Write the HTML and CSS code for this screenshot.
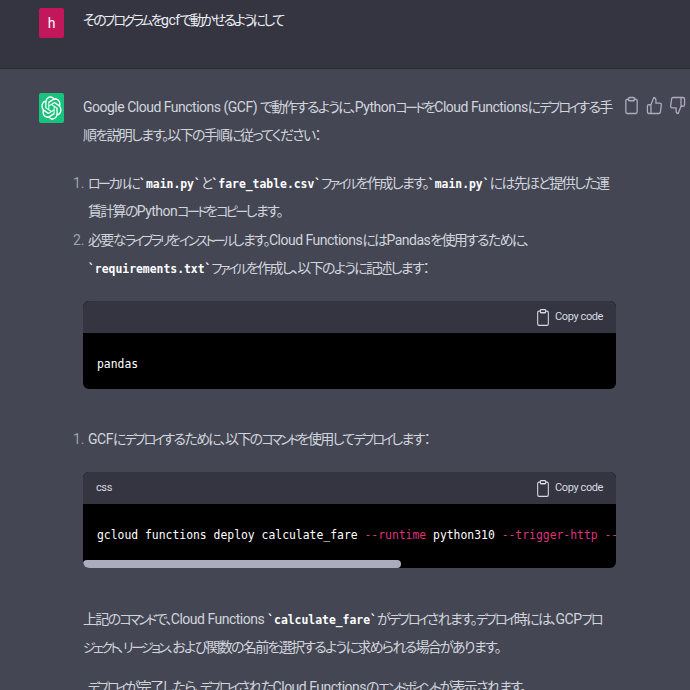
FILE: index.html
```html
<!DOCTYPE html>
<html lang="ja">
  <head>
    <meta charset="utf-8">
    <meta name="viewport" content="width=device-width,initial-scale=1.0">
    <title>ChatGPT</title>
    <link rel="stylesheet" href="styles.css">
  </head>
  <body>
    <section class="row userRow">
      <div class="avatar userAvatar">h</div>
      <div class="userText">その<span class="ka">プログラム</span>を<span class="en">gcf</span>で動かせるようにして</div>
    </section>

    <section class="row botRow">
      <div class="avatar botAvatar">
        <svg viewBox="0 0 41 41" width="21" height="24" fill="#fff" preserveAspectRatio="none"><path d="M37.5324 16.8707C37.9808 15.5241 38.1363 14.0974 37.9886 12.6859C37.8409 11.2744 37.3934 9.91076 36.676 8.68622C35.6126 6.83404 33.9882 5.3676 32.0373 4.4985C30.0864 3.62941 27.9098 3.40259 25.8215 3.85078C24.8796 2.7893 23.7219 1.94125 22.4257 1.36341C21.1295 0.785575 19.7249 0.491269 18.3058 0.500197C16.1708 0.495044 14.0893 1.16803 12.3614 2.42214C10.6335 3.67624 9.34853 5.44666 8.6917 7.47815C7.30085 7.76286 5.98686 8.3414 4.8377 9.17505C3.68854 10.0087 2.73073 11.0782 2.02839 12.312C0.956464 14.1591 0.498905 16.2988 0.721698 18.4228C0.944492 20.5467 1.83612 22.5449 3.268 24.1293C2.81966 25.4759 2.66413 26.9026 2.81182 28.3141C2.95951 29.7256 3.40701 31.0892 4.12437 32.3138C5.18791 34.1659 6.8123 35.6322 8.76321 36.5013C10.7141 37.3704 12.8907 37.5973 14.9789 37.1492C15.9208 38.2107 17.0786 39.0587 18.3747 39.6366C19.6709 40.2144 21.0755 40.5087 22.4946 40.4998C24.6307 40.5054 26.7133 39.8321 28.4418 38.5772C30.1704 37.3223 31.4556 35.5506 32.1119 33.5179C33.5027 33.2332 34.8167 32.6547 35.9659 31.821C37.115 30.9874 38.0728 29.9178 38.7752 28.684C39.8458 26.8371 40.3023 24.6979 40.0789 22.5748C39.8556 20.4517 38.9639 18.4544 37.5324 16.8707ZM22.4978 37.8849C20.7443 37.8874 19.0459 37.2733 17.6994 36.1501C17.7601 36.117 17.8666 36.0586 17.936 36.0161L25.9004 31.4156C26.1003 31.3019 26.2663 31.137 26.3813 30.9378C26.4964 30.7386 26.5563 30.5124 26.5549 30.2825V19.0542L29.9213 20.998C29.9389 21.0068 29.9541 21.0198 29.9656 21.0359C29.977 21.052 29.9842 21.0707 29.9867 21.0902V30.3889C29.9842 32.375 29.1946 34.2791 27.7909 35.6841C26.3872 37.0892 24.4838 37.8806 22.4978 37.8849ZM6.39227 31.0064C5.51397 29.4888 5.19742 27.7107 5.49804 25.9832C5.55718 26.0187 5.66048 26.0818 5.73461 26.1244L13.699 30.7248C13.8975 30.8408 14.1233 30.902 14.3532 30.902C14.583 30.902 14.8088 30.8408 15.0073 30.7248L24.731 25.1103V28.9979C24.7321 29.0177 24.7283 29.0376 24.7199 29.0556C24.7115 29.0736 24.6988 29.0893 24.6829 29.1012L16.6317 33.7497C14.9096 34.7416 12.8643 35.0097 10.9447 34.4954C9.02506 33.9811 7.38785 32.7263 6.39227 31.0064ZM4.29707 13.6194C5.17156 12.0998 6.55279 10.9364 8.19885 10.3327C8.19885 10.4013 8.19491 10.5228 8.19491 10.6071V19.808C8.19351 20.0378 8.25334 20.2638 8.36823 20.4629C8.48312 20.6619 8.64893 20.8267 8.84863 20.9404L18.5723 26.5542L15.206 28.4979C15.1894 28.5089 15.1703 28.5155 15.1505 28.5173C15.1307 28.5191 15.1107 28.516 15.0924 28.5082L7.04046 23.8557C5.32135 22.8601 4.06716 21.2235 3.55289 19.3046C3.03862 17.3858 3.30624 15.3413 4.29707 13.6194ZM31.955 20.0556L22.2312 14.4411L25.5976 12.4981C25.6142 12.4872 25.6333 12.4805 25.6531 12.4787C25.6729 12.4769 25.6928 12.4801 25.7111 12.4879L33.7631 17.1364C34.9967 17.849 36.0017 18.8982 36.6606 20.1613C37.3194 21.4244 37.6047 22.849 37.4832 24.2684C37.3617 25.6878 36.8382 27.0432 35.9743 28.1759C35.1103 29.3086 33.9415 30.1717 32.6047 30.6641C32.6047 30.5947 32.6047 30.4733 32.6047 30.3889V21.188C32.6066 20.9586 32.5474 20.7328 32.4332 20.5338C32.319 20.3348 32.154 20.1698 31.955 20.0556ZM35.3055 15.0128C35.2464 14.9765 35.1431 14.9142 35.069 14.8717L27.1045 10.2712C26.906 10.1554 26.6803 10.0943 26.4504 10.0943C26.2206 10.0943 25.9948 10.1554 25.7963 10.2712L16.0726 15.8858V11.9982C16.0715 11.9783 16.0753 11.9585 16.0837 11.9405C16.0921 11.9225 16.1048 11.9068 16.1207 11.8949L24.1719 7.25025C25.4053 6.53903 26.8158 6.19376 28.2383 6.25482C29.6608 6.31589 31.0364 6.78077 32.2044 7.59508C33.3723 8.40939 34.2842 9.53945 34.8334 10.8531C35.3826 12.1667 35.5464 13.6095 35.3055 15.0128ZM14.2424 21.9419L10.8752 19.9981C10.8576 19.9893 10.8423 19.9763 10.8309 19.9602C10.8195 19.9441 10.8122 19.9254 10.8098 19.9058V10.6071C10.8107 9.18295 11.2173 7.78848 11.9819 6.58696C12.7466 5.38544 13.8377 4.42659 15.1275 3.82264C16.4173 3.21869 17.8524 2.99464 19.2649 3.1767C20.6775 3.35876 22.0089 3.93941 23.1034 4.85067C23.0427 4.88379 22.937 4.94215 22.8668 4.98473L14.9024 9.58517C14.7025 9.69878 14.5366 9.86356 14.4215 10.0626C14.3065 10.2616 14.2466 10.4877 14.2479 10.7175L14.2424 21.9419ZM16.071 17.9991L20.4018 15.4978L24.7325 17.9975V22.9985L20.4018 25.4983L16.071 22.9985V17.9991Z"/></svg>
      </div>
      <div class="content">
        <p><span class="en">Google Cloud Functions (GCF) </span>で動作するように、<span class="en">Python</span><span class="ka">コード</span>を<span class="en">Cloud Functions</span>に<span class="ka">デプロイ</span>する手<br>順を説明します。以下の手順に従ってください：</p>
        <ol>
          <li><span class="ka">ローカル</span>に<code>`main.py`</code>と<code>`fare_table.csv`</code><span class="ka">ファイル</span>を作成します。<code>`main.py`</code>には先ほど提供した運<br>賃計算の<span class="en">Python</span><span class="ka">コード</span>を<span class="ka">コピー</span>します。</li>
          <li>必要な<span class="ka">ライブラリ</span>を<span class="ka">インストール</span>します。<span class="en">Cloud Functions</span>には<span class="en">Pandas</span>を使用するために、<br><code>`requirements.txt`</code><span class="ka">ファイル</span>を作成し、以下のように記述します：</li>
        </ol>
        <div class="codeBox">
          <div class="codeHead">
            <span></span>
            <span class="copyBtn">
              <svg class="copyIcon" viewBox="0 0 24 24" preserveAspectRatio="none"><path d="M16 4h2a2 2 0 0 1 2 2v14a2 2 0 0 1-2 2H6a2 2 0 0 1-2-2V6a2 2 0 0 1 2-2h2"/><rect x="8" y="2" width="8" height="4" rx="1"/></svg>
              Copy code
            </span>
          </div>
          <pre class="codeBody">pandas</pre>
        </div>
        <ol class="listAfter">
          <li><span class="en">GCF</span>に<span class="ka">デプロイ</span>するために、以下の<span class="ka">コマンド</span>を使用して<span class="ka">デプロイ</span>します：</li>
        </ol>
        <div class="codeBox">
          <div class="codeHead">
            <span>css</span>
            <span class="copyBtn">
              <svg class="copyIcon" viewBox="0 0 24 24" preserveAspectRatio="none"><path d="M16 4h2a2 2 0 0 1 2 2v14a2 2 0 0 1-2 2H6a2 2 0 0 1-2-2V6a2 2 0 0 1 2-2h2"/><rect x="8" y="2" width="8" height="4" rx="1"/></svg>
              Copy code
            </span>
          </div>
          <pre class="codeBody">gcloud functions deploy calculate_fare <span class="flag">--runtime</span> python310 <span class="flag">--trigger-http</span> <span class="flag">--allow-unauthenticated</span></pre>
          <div class="scrollTrack"><div class="scrollThumb"></div></div>
        </div>
        <p class="afterCode">上記の<span class="ka">コマンド</span>で、<span class="en">Cloud Functions </span><code>`calculate_fare`</code>が<span class="ka">デプロイ</span>されます。<span class="ka">デプロイ</span>時には、<span class="en">GCP</span><span class="ka">プロ</span><br><span class="ka">ジェクト</span>、<span class="ka">リージョン</span>、および関数の名前を選択するように求められる場合があります。</p>
        <p class="lastLine"><span class="ka">デプロイ</span>が完了したら、<span class="ka">デプロイ</span>された<span class="en">Cloud Functions</span>の<span class="ka">エンドポイント</span>が表示されます。</p>
      </div>
      <div class="actions">
        <svg viewBox="0 0 24 24" preserveAspectRatio="none"><path d="M16 4h2a2 2 0 0 1 2 2v14a2 2 0 0 1-2 2H6a2 2 0 0 1-2-2V6a2 2 0 0 1 2-2h2"/><rect x="8" y="2" width="8" height="4" rx="1"/></svg>
        <svg viewBox="0 0 24 24" preserveAspectRatio="none"><path d="M14 9V5a3 3 0 0 0-3-3l-4 9v11h11.28a2 2 0 0 0 2-1.7l1.38-9a2 2 0 0 0-2-2.3zM7 22H4a2 2 0 0 1-2-2v-7a2 2 0 0 1 2-2h3"/></svg>
        <svg viewBox="0 0 24 24" preserveAspectRatio="none"><path d="M10 15v4a3 3 0 0 0 3 3l4-9V2H5.72a2 2 0 0 0-2 1.7l-1.38 9a2 2 0 0 0 2 2.3zm7-13h2.67A2.31 2.31 0 0 1 22 4v7a2.31 2.31 0 0 1-2.33 2H17"/></svg>
      </div>
    </section>
  </body>
</html>
```

FILE: styles.css
```css
html, body {
  height: 100%;
  overflow: hidden;
}
body {
  margin: 0;
  padding: 0;
  background-color: #444654;
  color: #d1d5db;
  font-family: Roboto, "Noto Sans CJK JP", sans-serif;
  font-size: 14px;
  line-height: 28px;
  letter-spacing: -1.7px;
  font-feature-settings: "palt";
}
.en {
  letter-spacing: -0.5px;
}
.ka {
  font-size: 13px;
  line-height: 1;
  letter-spacing: -2.6px;
}
.row {
  display: flex;
  align-items: flex-start;
  padding-left: 39px;
}
.userRow {
  height: 69px;
  box-sizing: border-box;
  padding-top: 8px;
  background-color: #343541;
  border-bottom: 1px solid #2b2c36;
  color: #ececf1;
}
.botRow {
  padding-top: 24px;
}
.avatar {
  flex: none;
  width: 25px;
  height: 30px;
  border-radius: 2px;
  display: flex;
  align-items: center;
  justify-content: center;
  color: #fff;
  letter-spacing: 0;
}
.userAvatar {
  background-color: #c2185b;
}
.botAvatar {
  background-color: #19c37d;
}
.userText {
  margin-left: 19px;
  line-height: 24px;
  letter-spacing: -2.5px;
}
.content {
  flex: none;
  width: 533px;
  margin-left: 19px;
}
p {
  margin: 0;
  white-space: nowrap;
}
ol {
  margin: 20px 0 0 0;
  padding-left: 5px;
  white-space: nowrap;
}
li {
  margin-bottom: 1px;
}
li::marker {
  color: #9ca3af;
  letter-spacing: 0;
}
code {
  font-family: "DejaVu Sans Mono", monospace;
  font-size: 11.4px;
  font-weight: bold;
  line-height: 1;
  letter-spacing: 0;
  color: #fff;
}
.codeBox {
  margin-top: 19px;
  border-radius: 6px;
  overflow: hidden;
  background-color: #000;
}
.codeHead {
  height: 32px;
  padding: 0 13px;
  display: flex;
  align-items: center;
  justify-content: space-between;
  background-color: #343541;
  font-size: 11px;
  line-height: 16px;
  letter-spacing: -0.4px;
  color: #d9d9e3;
}
.copyBtn {
  display: flex;
  align-items: center;
  gap: 4px;
}
.copyIcon {
  width: 16px;
  height: 19px;
  fill: none;
  stroke: currentColor;
  stroke-width: 1.6;
  stroke-linecap: round;
  stroke-linejoin: round;
}
.codeBody {
  margin: 0;
  padding: 17px 14px 15px;
  height: 24px;
  overflow: hidden;
  color: #fff;
  font-family: "DejaVu Sans Mono", monospace;
  font-size: 11.4px;
  line-height: 28px;
  letter-spacing: 0;
}
.scrollTrack {
  height: 8px;
}
.scrollThumb {
  width: 318px;
  height: 8px;
  border-radius: 4px;
  background-color: #acacbe;
}
.flag {
  color: #df3079;
}
.listAfter {
  margin-top: 36px;
  margin-bottom: 1px;
}
.afterCode {
  margin-top: 37px;
}
.lastLine {
  margin-top: 12px;
  padding-left: 5px;
}
.actions {
  flex: none;
  display: flex;
  gap: 6px;
  margin-left: 7px;
  margin-top: 3px;
  color: #acacbe;
}
.actions svg {
  flex: none;
  width: 17px;
  height: 19px;
  fill: none;
  stroke: currentColor;
  stroke-width: 1.8;
  stroke-linecap: round;
  stroke-linejoin: round;
}
```
